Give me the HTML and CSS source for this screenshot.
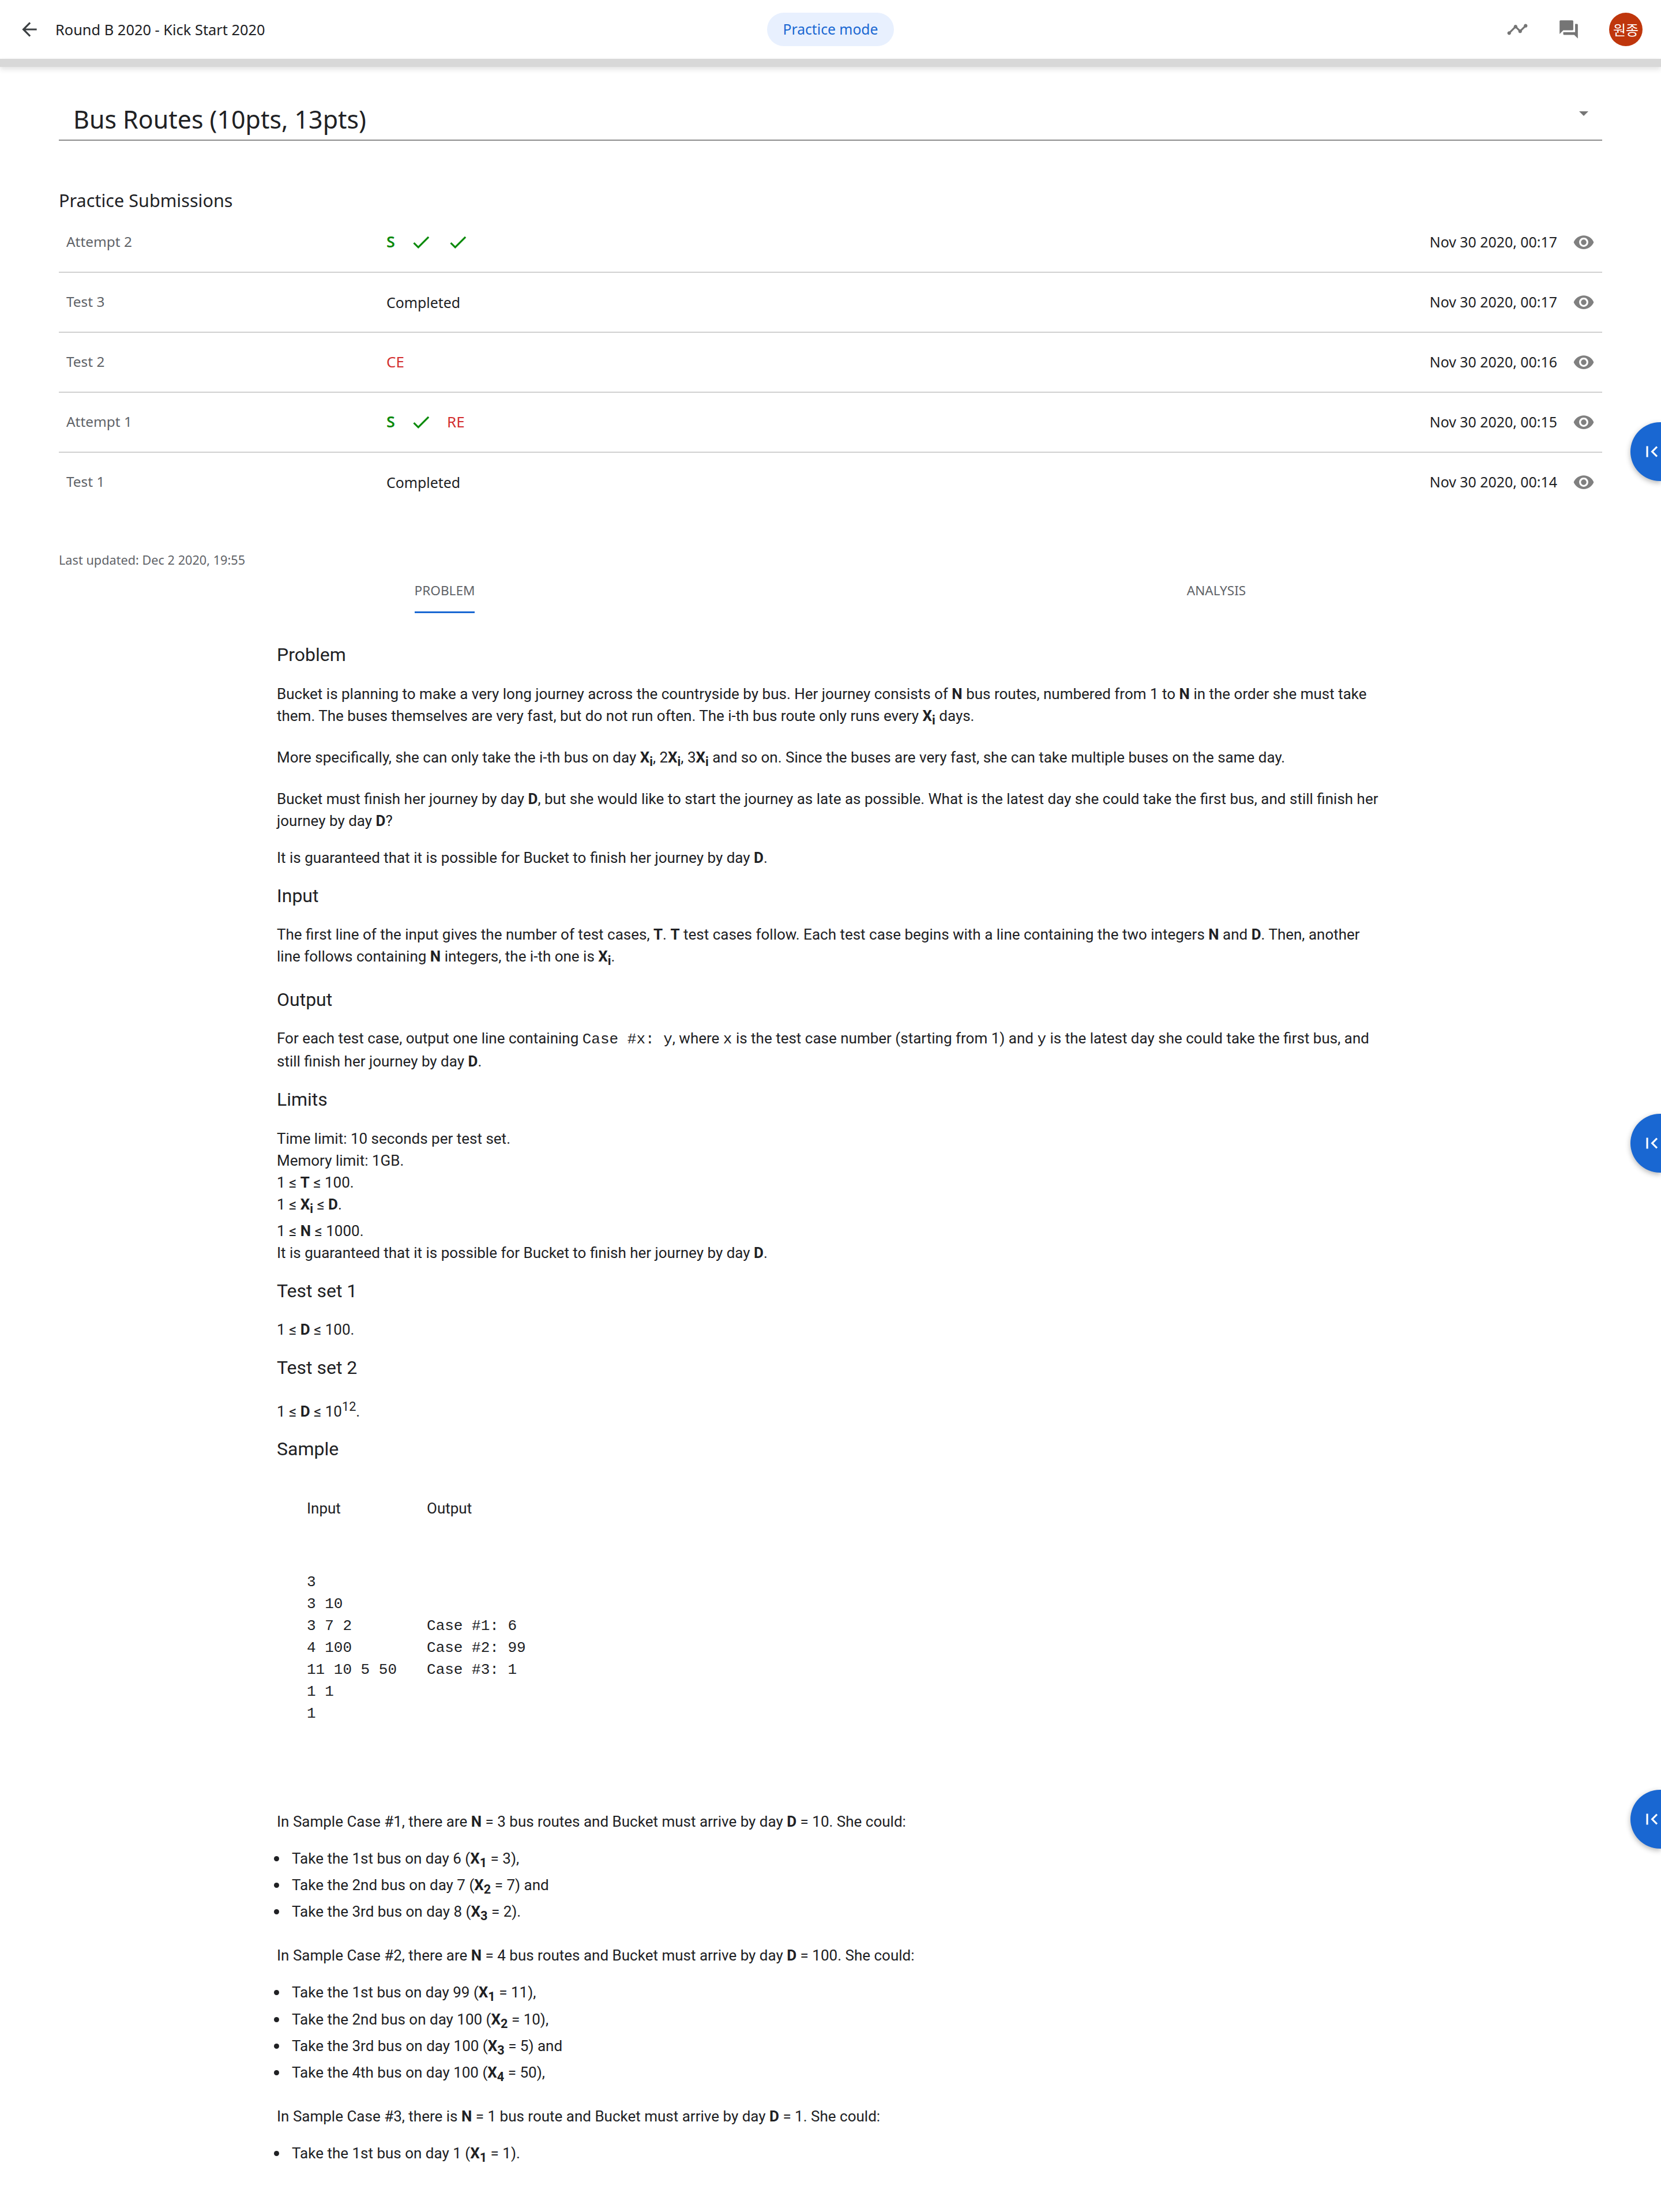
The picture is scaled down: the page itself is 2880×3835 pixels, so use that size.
FILE: index.html
```html
<!DOCTYPE html>
<html lang="en">
<head>
<meta charset="utf-8">
<title>Round B 2020 - Kick Start 2020</title>
<link rel="stylesheet" href="styles.css">
</head>
<body>

<header class="topbar">
  <div class="topbar-left">
    <svg class="back-icon" viewBox="0 0 24 24"><path d="M20 11H7.83l5.59-5.59L12 4l-8 8 8 8 1.41-1.41L7.83 13H20v-2z"/></svg>
    <span class="contest-name">Round B 2020 - Kick Start 2020</span>
  </div>
  <div class="topbar-mid"><span class="mode-pill">Practice mode</span></div>
  <div class="topbar-right">
    <svg class="bar-icon" viewBox="0 0 24 24"><path d="M23 8c0 1.1-.9 2-2 2-.18 0-.35-.02-.51-.07l-3.56 3.55c.05.16.07.34.07.52 0 1.1-.9 2-2 2s-2-.9-2-2c0-.18.02-.36.07-.52l-2.55-2.55c-.16.05-.34.07-.52.07s-.36-.02-.52-.07l-4.55 4.56c.05.16.07.33.07.51 0 1.1-.9 2-2 2s-2-.9-2-2 .9-2 2-2c.18 0 .35.02.51.07l4.56-4.55C8.02 9.36 8 9.18 8 9c0-1.1.9-2 2-2s2 .9 2 2c0 .18-.02.36-.07.52l2.55 2.55c.16-.05.34-.07.52-.07s.36.02.52.07l3.55-3.56C19.02 8.35 19 8.18 19 8c0-1.1.9-2 2-2s2 .9 2 2z"/></svg>
    <svg class="bar-icon" viewBox="0 0 24 24"><path d="M21 6h-2v9H6v2c0 .55.45 1 1 1h11l4 4V7c0-.55-.45-1-1-1zm-4 6V3c0-.55-.45-1-1-1H3c-.55 0-1 .45-1 1v14l4-4h10c.55 0 1-.45 1-1z"/></svg>
    <span class="avatar">원종</span>
  </div>
</header>
<div class="bar-strip"></div>

<main class="page">
  <div class="task-select">
    <span class="task-name">Bus Routes (10pts, 13pts)</span>
    <span class="task-arrow"></span>
  </div>

  <h2 class="subs-title">Practice Submissions</h2>
  <div class="subs">
    <div class="sub-row">
      <span class="sub-name">Attempt 2</span>
      <div class="sub-status">
        <span class="slot-s ok">S</span>
        <svg class="check" viewBox="0 0 24 24"><path d="M9 16.17L4.83 12l-1.42 1.41L9 19 21 7l-1.41-1.41z"/></svg>
        <svg class="check" viewBox="0 0 24 24"><path d="M9 16.17L4.83 12l-1.42 1.41L9 19 21 7l-1.41-1.41z"/></svg>
      </div>
      <span class="sub-date">Nov 30 2020, 00:17</span>
      <svg class="eye" viewBox="0 0 24 24"><path d="M12 4.5C7 4.5 2.73 7.61 1 12c1.73 4.39 6 7.5 11 7.5s9.27-3.11 11-7.5c-1.73-4.39-6-7.5-11-7.5zM12 17c-2.76 0-5-2.24-5-5s2.24-5 5-5 5 2.24 5 5-2.24 5-5 5zm0-8c-1.66 0-3 1.34-3 3s1.34 3 3 3 3-1.34 3-3-1.34-3-3-3z"/></svg>
    </div>
    <div class="sub-row">
      <span class="sub-name">Test 3</span>
      <div class="sub-status">Completed</div>
      <span class="sub-date">Nov 30 2020, 00:17</span>
      <svg class="eye" viewBox="0 0 24 24"><path d="M12 4.5C7 4.5 2.73 7.61 1 12c1.73 4.39 6 7.5 11 7.5s9.27-3.11 11-7.5c-1.73-4.39-6-7.5-11-7.5zM12 17c-2.76 0-5-2.24-5-5s2.24-5 5-5 5 2.24 5 5-2.24 5-5 5zm0-8c-1.66 0-3 1.34-3 3s1.34 3 3 3 3-1.34 3-3-1.34-3-3-3z"/></svg>
    </div>
    <div class="sub-row">
      <span class="sub-name">Test 2</span>
      <div class="sub-status bad">CE</div>
      <span class="sub-date">Nov 30 2020, 00:16</span>
      <svg class="eye" viewBox="0 0 24 24"><path d="M12 4.5C7 4.5 2.73 7.61 1 12c1.73 4.39 6 7.5 11 7.5s9.27-3.11 11-7.5c-1.73-4.39-6-7.5-11-7.5zM12 17c-2.76 0-5-2.24-5-5s2.24-5 5-5 5 2.24 5 5-2.24 5-5 5zm0-8c-1.66 0-3 1.34-3 3s1.34 3 3 3 3-1.34 3-3-1.34-3-3-3z"/></svg>
    </div>
    <div class="sub-row">
      <span class="sub-name">Attempt 1</span>
      <div class="sub-status">
        <span class="slot-s ok">S</span>
        <svg class="check" viewBox="0 0 24 24"><path d="M9 16.17L4.83 12l-1.42 1.41L9 19 21 7l-1.41-1.41z"/></svg>
        <span class="bad">RE</span>
      </div>
      <span class="sub-date">Nov 30 2020, 00:15</span>
      <svg class="eye" viewBox="0 0 24 24"><path d="M12 4.5C7 4.5 2.73 7.61 1 12c1.73 4.39 6 7.5 11 7.5s9.27-3.11 11-7.5c-1.73-4.39-6-7.5-11-7.5zM12 17c-2.76 0-5-2.24-5-5s2.24-5 5-5 5 2.24 5 5-2.24 5-5 5zm0-8c-1.66 0-3 1.34-3 3s1.34 3 3 3 3-1.34 3-3-1.34-3-3-3z"/></svg>
    </div>
    <div class="sub-row last">
      <span class="sub-name">Test 1</span>
      <div class="sub-status">Completed</div>
      <span class="sub-date">Nov 30 2020, 00:14</span>
      <svg class="eye" viewBox="0 0 24 24"><path d="M12 4.5C7 4.5 2.73 7.61 1 12c1.73 4.39 6 7.5 11 7.5s9.27-3.11 11-7.5c-1.73-4.39-6-7.5-11-7.5zM12 17c-2.76 0-5-2.24-5-5s2.24-5 5-5 5 2.24 5 5-2.24 5-5 5zm0-8c-1.66 0-3 1.34-3 3s1.34 3 3 3 3-1.34 3-3-1.34-3-3-3z"/></svg>
    </div>
  </div>

  <p class="updated">Last updated: Dec 2 2020, 19:55</p>

  <div class="tabs">
    <div class="tab"><span class="tab-label active">PROBLEM</span></div>
    <div class="tab"><span class="tab-label">ANALYSIS</span></div>
  </div>

  <article class="statement">
    <h3>Problem</h3>
    <p>Bucket is planning to make a very long journey across the countryside by bus. Her journey consists of <b>N</b> bus routes, numbered from 1 to <b>N</b> in the order she must take them. The buses themselves are very fast, but do not run often. The i-th bus route only runs every <b>X<sub>i</sub></b> days.</p>
    <p>More specifically, she can only take the i-th bus on day <b>X<sub>i</sub></b>, 2<b>X<sub>i</sub></b>, 3<b>X<sub>i</sub></b> and so on. Since the buses are very fast, she can take multiple buses on the same day.</p>
    <p>Bucket must finish her journey by day <b>D</b>, but she would like to start the journey as late as possible. What is the latest day she could take the first bus, and still finish her journey by day <b>D</b>?</p>
    <p>It is guaranteed that it is possible for Bucket to finish her journey by day <b>D</b>.</p>

    <h3>Input</h3>
    <p>The first line of the input gives the number of test cases, <b>T</b>. <b>T</b> test cases follow. Each test case begins with a line containing the two integers <b>N</b> and <b>D</b>. Then, another line follows containing <b>N</b> integers, the i-th one is <b>X<sub>i</sub></b>.</p>

    <h3>Output</h3>
    <p>For each test case, output one line containing <code>Case #x: y</code>, where <code>x</code> is the test case number (starting from 1) and <code>y</code> is the latest day she could take the first bus, and still finish her journey by day <b>D</b>.</p>

    <h3>Limits</h3>
    <p>Time limit: 10 seconds per test set.<br>
    Memory limit: 1GB.<br>
    1 ≤ <b>T</b> ≤ 100.<br>
    1 ≤ <b>X<sub>i</sub></b> ≤ <b>D</b>.<br>
    1 ≤ <b>N</b> ≤ 1000.<br>
    It is guaranteed that it is possible for Bucket to finish her journey by day <b>D</b>.</p>

    <h3>Test set 1</h3>
    <p>1 ≤ <b>D</b> ≤ 100.</p>

    <h3>Test set 2</h3>
    <p>1 ≤ <b>D</b> ≤ 10<sup>12</sup>.</p>

    <h3>Sample</h3>
    <table class="sample">
      <tr><th>Input</th><th>Output</th></tr>
      <tr>
        <td><pre>3
3 10
3 7 2
4 100
11 10 5 50
1 1
1</pre></td>
        <td><pre>


Case #1: 6
Case #2: 99
Case #3: 1</pre></td>
      </tr>
    </table>

    <p>In Sample Case #1, there are <b>N</b> = 3 bus routes and Bucket must arrive by day <b>D</b> = 10. She could:</p>
    <ul>
      <li>Take the 1st bus on day 6 (<b>X<sub>1</sub></b> = 3),</li>
      <li>Take the 2nd bus on day 7 (<b>X<sub>2</sub></b> = 7) and</li>
      <li>Take the 3rd bus on day 8 (<b>X<sub>3</sub></b> = 2).</li>
    </ul>
    <p>In Sample Case #2, there are <b>N</b> = 4 bus routes and Bucket must arrive by day <b>D</b> = 100. She could:</p>
    <ul>
      <li>Take the 1st bus on day 99 (<b>X<sub>1</sub></b> = 11),</li>
      <li>Take the 2nd bus on day 100 (<b>X<sub>2</sub></b> = 10),</li>
      <li>Take the 3rd bus on day 100 (<b>X<sub>3</sub></b> = 5) and</li>
      <li>Take the 4th bus on day 100 (<b>X<sub>4</sub></b> = 50),</li>
    </ul>
    <p>In Sample Case #3, there is <b>N</b> = 1 bus route and Bucket must arrive by day <b>D</b> = 1. She could:</p>
    <ul>
      <li>Take the 1st bus on day 1 (<b>X<sub>1</sub></b> = 1).</li>
    </ul>
  </article>
</main>

<button class="fab fab-1"><svg viewBox="0 0 24 24"><path d="M18.41 16.59L13.82 12l4.59-4.59L17 6l-6 6 6 6zM6 6h2v12H6z"/></svg></button>
<button class="fab fab-2"><svg viewBox="0 0 24 24"><path d="M18.41 16.59L13.82 12l4.59-4.59L17 6l-6 6 6 6zM6 6h2v12H6z"/></svg></button>
<button class="fab fab-3"><svg viewBox="0 0 24 24"><path d="M18.41 16.59L13.82 12l4.59-4.59L17 6l-6 6 6 6zM6 6h2v12H6z"/></svg></button>

</body>
</html>
```
FILE: styles.css
```css
body {
  margin: 0;
  font-family: Roboto, Arial, sans-serif;
  font-size: 26px;
  line-height: 38px;
  color: #202124;
  background: #fff;
  position: relative;
}

/* top bar */
.topbar {
  height: 102px;
  display: flex;
  align-items: center;
  padding: 0 32px;
}
.topbar-left, .topbar-right {
  flex: 1;
  display: flex;
  align-items: center;
}
.topbar-right {
  justify-content: flex-end;
  gap: 51px;
}
.back-icon {
  width: 38px;
  height: 38px;
  fill: #3c4043;
  margin-right: 26px;
}
.contest-name {
  font-family: "Noto Sans", sans-serif;
  font-size: 25.4px;
}
.topbar-mid {
  display: flex;
  justify-content: center;
}
.mode-pill {
  font-family: "Noto Sans", sans-serif;
  font-size: 24.7px;
  width: 220px;
  height: 58px;
  line-height: 58px;
  text-align: center;
  border-radius: 29px;
  background: #e8f0fe;
  color: #1967d2;
}
.bar-icon {
  width: 38px;
  height: 38px;
  fill: #757575;
}
.avatar {
  width: 58px;
  height: 58px;
  border-radius: 50%;
  background: #bf360c;
  color: #fff;
  font-family: "Noto Sans CJK KR", sans-serif;
  font-size: 24px;
  line-height: 58px;
  text-align: center;
}
.bar-strip {
  height: 14px;
  background: #d8d8d8;
  box-shadow: 0 4px 10px rgba(0, 0, 0, 0.12);
}

/* task select */
.page {
  margin: 0 102px;
}
.task-select {
  margin-top: 64px;
  height: 62px;
  padding: 0 13px 0 25px;
  border-bottom: 2px solid #8c8c8c;
  display: flex;
  justify-content: space-between;
}
.task-name {
  font-family: "Noto Sans", sans-serif;
  font-size: 42.9px;
  line-height: 54px;
}
.task-arrow {
  width: 0;
  height: 0;
  margin: 13px 11px 0 0;
  border-left: 8px solid transparent;
  border-right: 8px solid transparent;
  border-top: 8px solid #757575;
}

/* submissions */
.subs-title {
  font-family: "Noto Sans", sans-serif;
  font-weight: 400;
  font-size: 30.6px;
  line-height: 40px;
  margin: 83px 0 2px;
}
.sub-row {
  height: 102px;
  border-bottom: 2px solid #d0d0d0;
  display: flex;
  align-items: center;
  padding: 0 13px;
  font-family: "Noto Sans", sans-serif;
  font-size: 24.9px;
}
.sub-row.last {
  border-bottom: 0;
}
.sub-name {
  width: 555px;
  margin-bottom: 3px;
  color: #5f6368;
  font-size: 24.4px;
}
.sub-status {
  flex: 1;
  display: flex;
  align-items: center;
}
.slot-s {
  width: 41px;
  margin-bottom: 3px;
  font-weight: 600;
  font-size: 27px;
}
.ok {
  color: #0b8a0b;
}
.bad {
  color: #d32f2f;
  font-size: 26px;
  margin-bottom: 3px;
}
.check {
  width: 38px;
  height: 38px;
  margin-right: 26px;
  fill: #0b8a0b;
}
.sub-date {
  margin: 0 27px 3px 0;
}
.eye {
  width: 38px;
  height: 38px;
  fill: #808080;
}
.updated {
  font-family: "Noto Sans", sans-serif;
  font-size: 21.7px;
  line-height: 30px;
  color: #5f6368;
  margin: 69px 0 0;
}

/* tabs */
.tabs {
  display: grid;
  grid-template-columns: 1fr 1fr;
  padding-top: 23px;
}
.tab {
  display: flex;
  justify-content: center;
}
.tab-label {
  font-family: "Noto Sans", sans-serif;
  font-size: 22.6px;
  line-height: 30px;
  padding-bottom: 21px;
  color: #5f6368;
  border-bottom: 3px solid transparent;
}
.tab-label.active {
  border-bottom-color: #1967d2;
}

/* problem text */
.statement {
  margin: 51px 0 0 378px;
  width: 1920px;
}
.statement h3 {
  font-size: 32px;
  font-weight: 400;
  line-height: 42px;
  margin: 25px 0 27.5px;
}
.statement p {
  margin: 26px 0;
}
.statement h3 + p {
  margin-top: 27.5px;
}
.statement ul {
  margin: 26px 0 30px;
  padding-left: 26px;
  list-style: none;
}
.statement li::before {
  content: "";
  display: inline-block;
  width: 9px;
  height: 9px;
  margin: 0 22px 4px -31px;
  border-radius: 50%;
  background: #202124;
}
code, pre {
  font-family: "Liberation Mono", monospace;
  font-size: 26px;
}
pre {
  margin: 0;
  line-height: 38px;
}
.sample {
  border-collapse: collapse;
  margin: 0 0 104px 26px;
}
.sample th {
  font-weight: 400;
  text-align: left;
  padding: 35px 26px 45px;
}
.sample td {
  padding: 45px 26px;
  vertical-align: top;
}

/* side buttons */
.fab {
  position: absolute;
  right: 0;
  width: 53px;
  height: 102px;
  border: 0;
  padding: 0 0 0 18px;
  border-radius: 51px 0 0 51px;
  background: #1967d2;
  box-shadow: 0 3px 10px rgba(0, 0, 0, 0.3);
  display: flex;
  align-items: center;
}
.fab svg {
  width: 38px;
  height: 38px;
  flex: none;
  fill: #fff;
}
.fab-1 { top: 732px; }
.fab-2 { top: 1931px; }
.fab-3 { top: 3103px; }
```
